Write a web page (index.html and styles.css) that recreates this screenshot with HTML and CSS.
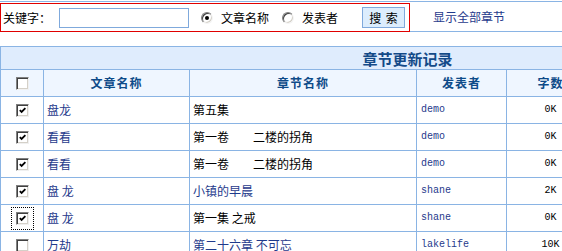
FILE: index.html
```html
<!DOCTYPE html>
<html lang="zh">
<head>
<meta charset="utf-8">
<title>章节更新记录</title>
<link rel="stylesheet" href="styles.css">
</head>
<body>
<div class="topbar">
  <form class="search">
    <label class="kw">关键字：</label>
    <span class="input"></span>
    <span class="radio on"></span><span class="rlabel">文章名称</span>
    <span class="radio"></span><span class="rlabel">发表者</span>
    <span class="btn">搜 索</span>
  </form>
  <div class="links"><a class="link" href="#">显示全部章节</a></div>
</div>

<table class="grid">
  <colgroup>
    <col class="c-sel"><col class="c-art"><col class="c-chap"><col class="c-auth"><col class="c-num"><col class="c-rest">
  </colgroup>
  <tr class="title"><th colspan="6">章节更新记录</th></tr>
  <tr class="head">
    <th class="sel"><span class="cb"></span></th>
    <th>文章名称</th><th>章节名称</th><th>发表者</th><th>字数</th><th></th>
  </tr>
  <tr>
    <td class="sel"><span class="cb on"><svg viewBox="0 0 7 7"><polyline points="0.8,3.2 2.6,5 6.4,1.2"/></svg></span></td>
    <td><a class="link" href="#">盘龙</a></td><td>第五集</td><td class="mono"><a class="link" href="#">demo</a></td><td class="num">0K</td><td></td>
  </tr>
  <tr>
    <td class="sel"><span class="cb on"><svg viewBox="0 0 7 7"><polyline points="0.8,3.2 2.6,5 6.4,1.2"/></svg></span></td>
    <td><a class="link" href="#">看看</a></td><td>第一卷　　二楼的拐角</td><td class="mono"><a class="link" href="#">demo</a></td><td class="num">0K</td><td></td>
  </tr>
  <tr>
    <td class="sel"><span class="cb on"><svg viewBox="0 0 7 7"><polyline points="0.8,3.2 2.6,5 6.4,1.2"/></svg></span></td>
    <td><a class="link" href="#">看看</a></td><td>第一卷　　二楼的拐角</td><td class="mono"><a class="link" href="#">demo</a></td><td class="num">0K</td><td></td>
  </tr>
  <tr>
    <td class="sel"><span class="cb on"><svg viewBox="0 0 7 7"><polyline points="0.8,3.2 2.6,5 6.4,1.2"/></svg></span></td>
    <td><a class="link" href="#">盘 龙</a></td><td><a class="link" href="#">小镇的早晨</a></td><td class="mono"><a class="link" href="#">shane</a></td><td class="num">2K</td><td></td>
  </tr>
  <tr>
    <td class="sel"><span class="cb on focus"><svg viewBox="0 0 7 7"><polyline points="0.8,3.2 2.6,5 6.4,1.2"/></svg></span></td>
    <td><a class="link" href="#">盘 龙</a></td><td>第一集 之戒</td><td class="mono"><a class="link" href="#">shane</a></td><td class="num">0K</td><td></td>
  </tr>
  <tr>
    <td class="sel"><span class="cb"></span></td>
    <td><a class="link" href="#">万劫</a></td><td><a class="link" href="#">第二十六章 不可忘</a></td><td class="mono"><a class="link" href="#">lakelife</a></td><td class="num">10K</td><td></td>
  </tr>
</table>
</body>
</html>
```

FILE: styles.css
```css
html, body { overflow: hidden; }
body {
  margin: 0;
  background: #fff;
  color: #000;
  font-family: "Noto Sans CJK SC", "Noto Sans", sans-serif;
  font-size: 12px;
  line-height: 1;
}
a.link { color: #1f3a8c; text-decoration: none; }

/* top search bar */
.topbar {
  margin-top: 1px;
  border-top: 1px solid #8ab4e4;
  padding-top: 1px;
  display: flex;
  width: 900px;
}
.search {
  margin: 0;
  box-sizing: border-box;
  width: 410px;
  height: 29px;
  border: 1px solid #e00000;
  display: flex;
  align-items: center;
  padding-left: 2px;
}
.kw { width: 56px; }
.input {
  box-sizing: border-box;
  width: 130px;
  height: 20px;
  border: 1px solid #7fa9dc;
  background: #fff;
}
.radio {
  box-sizing: border-box;
  width: 12px;
  height: 12px;
  border-radius: 50%;
  border: 1px solid;
  border-color: #808080 #f4f4f4 #f4f4f4 #808080;
  box-shadow: inset 1px 1px 0 #404040, inset -1px -1px 0 #d4d0c8;
  background: #fff;
  margin-left: 12px;
  display: flex;
  align-items: center;
  justify-content: center;
}
.radio + .rlabel { margin-left: 8px; }
.radio.on::after {
  content: "";
  width: 4px;
  height: 4px;
  border-radius: 50%;
  background: #000;
}
.rlabel + .radio { margin-left: 13px; }
.btn {
  box-sizing: border-box;
  margin-left: 24px;
  width: 43px;
  height: 21px;
  border: 1px solid #7fa9dc;
  background: #dcedfd;
  display: flex;
  align-items: center;
  justify-content: center;
  font-size: 12px;
  word-spacing: 2px;
}
.links {
  flex: 1;
  border-bottom: 1px solid #8ab4e4;
  display: flex;
  align-items: center;
  padding-left: 23px;
  padding-bottom: 1px;
}

/* grid */
.grid {
  margin-top: 14px;
  border-collapse: collapse;
  table-layout: fixed;
  width: 814px;
}
.c-sel { width: 43px; }
.c-art { width: 146px; }
.c-chap { width: 227px; }
.c-auth { width: 90px; }
.c-num { width: 88px; }
.c-rest { width: 220px; }
.grid th, .grid td {
  border: 1px solid #8ab4e4;
  padding: 0 0 0 3px;
  text-align: left;
  white-space: nowrap;
  overflow: hidden;
}
.grid tr { height: 27px; }
.grid tr.title { height: 23px; }
.title th {
  background: #dfecfd;
  color: #134a88;
  font-size: 15px;
  font-weight: bold;
  text-align: center;
  padding: 0;
}
.head th {
  background: #eff6ff;
  color: #0e4b89;
  font-weight: bold;
  text-align: center;
  letter-spacing: 1px;
  padding: 0;
}
.grid .sel { text-align: center; padding: 0; }
.grid .mono {
  font-family: "Liberation Mono", "DejaVu Sans Mono", monospace;
  font-size: 10px;
  padding-left: 4px;
}
.grid .num {
  text-align: center;
  padding: 0;
  font-family: "Liberation Mono", "DejaVu Sans Mono", monospace;
  font-size: 10px;
}

/* classic checkbox */
.cb {
  box-sizing: border-box;
  display: inline-flex;
  align-items: center;
  justify-content: center;
  width: 13px;
  height: 13px;
  vertical-align: middle;
  border: 1px solid;
  border-color: #808080 #f0f0f0 #f0f0f0 #808080;
  box-shadow: inset 1px 1px 0 #404040, inset -1px -1px 0 #d4d0c8;
  background: #fff;
}
.cb svg { width: 7px; height: 7px; }
.cb polyline { fill: none; stroke: #000; stroke-width: 1.8; }
.cb.focus { outline: 1px dotted #000; outline-offset: 4px; }
```
